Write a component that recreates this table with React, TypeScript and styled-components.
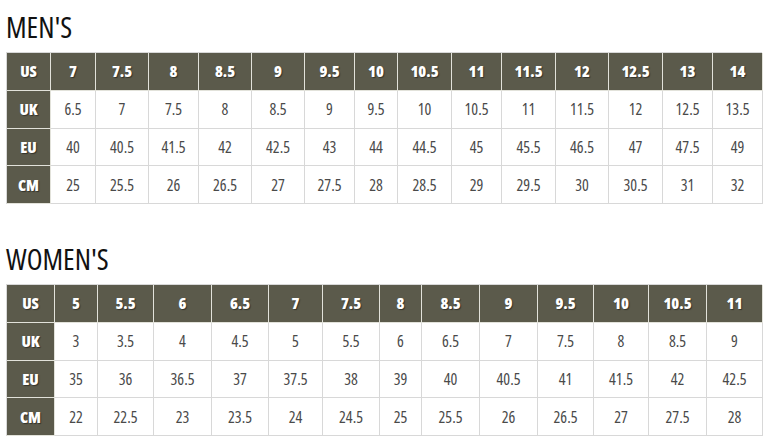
import React from "react";
import styled, {createGlobalStyle} from "styled-components";

// data
const men = {
    widths: [44, 45, 53, 50, 53, 53, 50, 43, 54, 50, 54, 53, 54, 50, 50],
    rows: [
        ["US", "7", "7.5", "8", "8.5", "9", "9.5", "10", "10.5", "11", "11.5", "12", "12.5", "13", "14"],
        ["UK", "6.5", "7", "7.5", "8", "8.5", "9", "9.5", "10", "10.5", "11", "11.5", "12", "12.5", "13.5"],
        ["EU", "40", "40.5", "41.5", "42", "42.5", "43", "44", "44.5", "45", "45.5", "46.5", "47", "47.5", "49"],
        ["CM", "25", "25.5", "26", "26.5", "27", "27.5", "28", "28.5", "29", "29.5", "30", "30.5", "31", "32"],
    ],
};

const women = {
    widths: [48, 43, 56, 58, 57, 54, 57, 42, 58, 58, 56, 55, 58, 56],
    rows: [
        ["US", "5", "5.5", "6", "6.5", "7", "7.5", "8", "8.5", "9", "9.5", "10", "10.5", "11"],
        ["UK", "3", "3.5", "4", "4.5", "5", "5.5", "6", "6.5", "7", "7.5", "8", "8.5", "9"],
        ["EU", "35", "36", "36.5", "37", "37.5", "38", "39", "40", "40.5", "41", "41.5", "42", "42.5"],
        ["CM", "22", "22.5", "23", "23.5", "24", "24.5", "25", "25.5", "26", "26.5", "27", "27.5", "28"],
    ],
};

interface ChartProps {
    title: string;
    widths: number[];
    rows: string[][];
}

const SizeChart: React.FC<ChartProps> = ({title, widths, rows}) => {
    return (
        <Section>
            <Title>{title}</Title>
            <Grid $cols={widths.map((w) => `${w}px`).join(" ")}>
                {rows.map((row, r) =>
                    row.map((value, c) => (
                        <Cell key={`${r}-${c}`} $dark={r === 0 || c === 0}>
                            {value}
                        </Cell>
                    ))
                )}
            </Grid>
        </Section>
    );
};

const App: React.FC = () => {
    return (
        <>
            <GlobalStyle/>
            <Page>
                <SizeChart title="MEN'S" widths={men.widths} rows={men.rows}/>
                <SizeChart title="WOMEN'S" widths={women.widths} rows={women.rows}/>
            </Page>
        </>
    );
};

const GlobalStyle = createGlobalStyle`
  html, body {
    margin: 0;
    padding: 0;
    background: #ffffff;
  }
`

const Page = styled.div`
  width: 777px;
  height: 441px;
  box-sizing: border-box;
  padding: 9px 0 0 6px;
  display: flex;
  flex-direction: column;
  gap: 37px;
  font-family: "Open Sans", "Liberation Sans", sans-serif;
`

const Section = styled.div`
  display: flex;
  flex-direction: column;
  gap: 8px;
`

const Title = styled.h2`
  margin: 0;
  height: 35px;
  line-height: 35px;
  font-stretch: 75%;
  font-size: 29px;
  font-weight: 400;
  color: #111;
`

const Grid = styled.div<{ $cols: string }>`
  display: grid;
  grid-template-columns: ${(p) => p.$cols};
  grid-template-rows: repeat(4, 37.75px);
  width: 756px;
  box-sizing: border-box;
  border-top: 1px solid #d8d8d8;
  border-left: 1px solid #d8d8d8;
`

const Cell = styled.div<{ $dark: boolean }>`
  display: flex;
  align-items: center;
  justify-content: center;
  box-sizing: border-box;
  border-right: 1px solid ${(p) => (p.$dark ? "#e2e2da" : "#d8d8d8")};
  border-bottom: 1px solid ${(p) => (p.$dark ? "#e2e2da" : "#d8d8d8")};
  background: ${(p) => (p.$dark ? "#5b5a4b" : "#ffffff")};
  color: ${(p) => (p.$dark ? "#ffffff" : "#4a4a4a")};
  font-stretch: ${(p) => (p.$dark ? "80%" : "87.5%")};
  font-size: 16px;
  font-weight: ${(p) => (p.$dark ? 800 : 400)};
  text-shadow: ${(p) => (p.$dark ? "1px 1px 1px rgba(0, 0, 0, 0.45)" : "none")};
`

export default App;
